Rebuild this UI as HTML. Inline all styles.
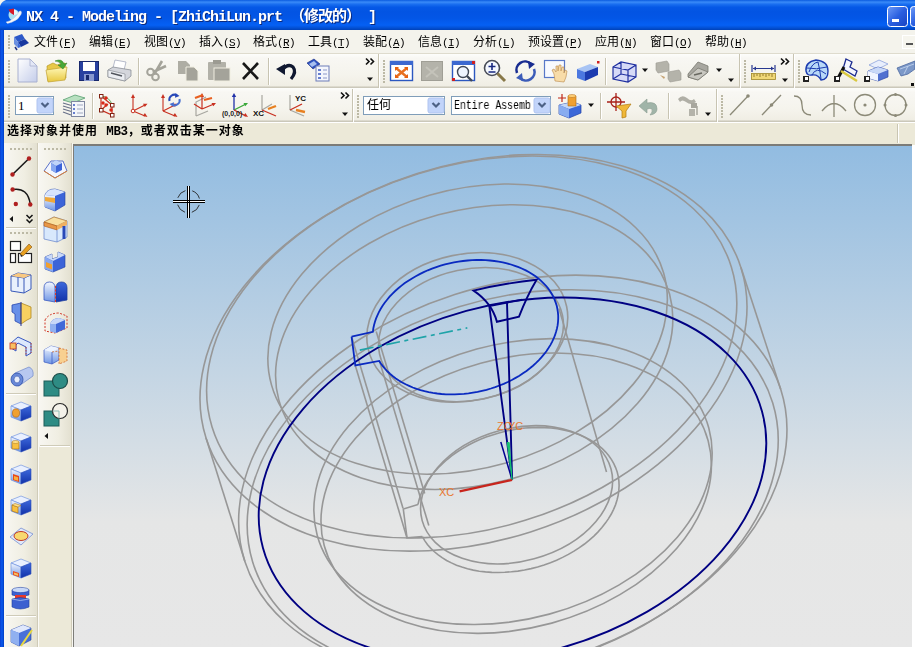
<!DOCTYPE html><html><head><meta charset="utf-8"><title>NX 4 - Modeling</title><style>
*{box-sizing:border-box;margin:0;padding:0}
html,body{width:915px;height:647px;overflow:hidden;background:#ece9d8}
body{position:relative;font-family:"Liberation Mono","Noto Sans CJK SC",monospace;font-size:12px;color:#000}
.abs{position:absolute}
#title{left:0;top:0;width:915px;height:30px;background:linear-gradient(to bottom,#0a5be0 0%,#3a8bf8 7%,#1a6ff0 14%,#0558e6 24%,#0354e3 40%,#0356e6 60%,#045df0 76%,#0560f4 84%,#0352d8 92%,#0042b8 100%)}
#title .t{will-change:transform;left:26px;top:10px;color:#fff;font-weight:bold;font-size:15px;letter-spacing:-1px;line-height:16px;white-space:pre;text-shadow:1px 1px 0 #0a2a80;font-family:"Liberation Mono","Noto Sans CJK SC",monospace}
#lborder{left:0;top:30px;width:4px;height:617px;background:linear-gradient(to right,#0a3fd0,#0a55e8 40%,#0650e0 75%,#0038b8)}
#menu{left:4px;top:30px;width:911px;height:24px;background:#f4f3ec;border-bottom:1px solid #dedbcd}
.mi{position:absolute;top:36px;will-change:transform;font-size:12px;line-height:14px;white-space:pre}
.mi .l{font-family:"Liberation Mono",monospace;font-size:11px;letter-spacing:-0.6px}
.st .l{font-family:"Liberation Mono",monospace;font-size:12.5px;letter-spacing:-0.3px}
.tb{left:4px;width:911px;background:linear-gradient(to bottom,#fdfdfb 0%,#f8f7f3 12%,#f5f4ed 60%,#f0eee4 94%,#cbc8ba 97%,#cbc8ba 100%)}
#tb1{top:54px;height:34px}
#tb2{top:88px;height:34px}
#status{left:4px;top:122px;width:911px;height:21px;background:#ece9d8;border-top:1px solid #fff}
.st{will-change:transform;left:7px;top:125px;font-weight:bold;font-size:12px;line-height:14px;letter-spacing:1px;white-space:pre;font-family:"Liberation Mono","Noto Sans CJK SC",monospace}
#left1{left:4px;top:143px;width:34px;height:504px;background:linear-gradient(to right,#f8f7f2,#f0eee2 60%,#e2dfcf 100%)}
#left2{left:38px;top:143px;width:34px;height:504px;background:linear-gradient(to right,#f8f7f2,#f0eee2 60%,#e2dfcf 100%)}
#view{left:72px;top:143px;width:843px;height:504px;background:#ece9d8;border-left:1px solid #f8f7f2}
#vb{left:73px;top:144px;width:839px;height:503px;background:#7c7c78}
#vr{left:912px;top:145px;width:3px;height:502px;background:#fff}
#l2b{left:39px;top:447px;width:32px;height:200px;background:#ece9d8}
#stsep{left:897px;top:124px;width:2px;height:19px;border-left:1px solid #c9c5b2;border-right:1px solid #fff}
#vp{left:74px;top:146px;width:838px;height:501px;background:linear-gradient(to bottom,#92bce1 0%,#e5e6e6 75%,#e7e7e7 100%)}
svg{position:absolute;left:0;top:0;overflow:visible}
.g{fill:none;stroke:#979797;stroke-width:1.6}
.b{fill:none;stroke:#000082;stroke-width:1.9}
.b2{fill:none;stroke:#0a2ac0;stroke-width:1.8}
.grip{position:absolute;width:3px;border-left:2px dotted #b0ac98}
.sep{position:absolute;width:2px;border-left:1px solid #c5c1b0;border-right:1px solid #fff}
.combo{position:absolute;background:#fff;border:1px solid #7f9db9;height:19px;font-size:12px;line-height:17px;padding-left:3px;white-space:pre;overflow:hidden}
.combo .btn{position:absolute;right:1px;top:1px;width:15px;height:15px;border-radius:2px;background:linear-gradient(135deg,#d6e2fb,#aec4f5 60%,#98b4ee);border:1px solid #b5c8f5}
.combo .btn:after{content:"";position:absolute;left:3px;top:3px;width:5px;height:5px;border-right:2px solid #4d6185;border-bottom:2px solid #4d6185;transform:rotate(45deg) scale(.8)}
.dd{position:absolute;width:0;height:0;border-left:3px solid transparent;border-right:3px solid transparent;border-top:4px solid #000}
.cb{will-change:transform;font-size:12px;line-height:15px;white-space:pre}
.chev{position:absolute;font-size:11px;font-weight:bold;line-height:10px;font-family:"Liberation Sans",sans-serif;letter-spacing:-1px}
</style></head><body><div id="title" class="abs"><div class="abs t">NX 4 - Modeling - [ZhiChiLun.prt （修改的） ]</div><svg width="915" height="30" viewBox="0 0 915 30"><g transform="translate(6,7)"><ellipse cx="8" cy="8" rx="5.500" ry="5.800" fill="#a8e0f0"/><path d="M2.500 2.500 L8 1.500 L8 8 Q4 6.500 2.500 2.500Z" fill="#d81828"/><path d="M8 2.500 Q11 3 12 7 L8 8Z" fill="#e8f4fc"/><path d="M0 15 Q9 13 13.500 4 Q16.500 3.500 15 7.500 Q11 14.500 1.500 16.500Z" fill="#f4f6fa" stroke="#c0c8d8" stroke-width=".4"/></g><path d="M0 0 H6 Q1.500 1.500 0 6Z" fill="#f4f4ee"/><rect x="887.5" y="6.5" width="20" height="20" rx="3" fill="url(#gbtn)" stroke="#fff" stroke-width="1"/><rect x="892" y="19" width="7" height="3" fill="#fff"/><rect x="910.5" y="6.5" width="20" height="20" rx="3" fill="url(#gbtn)" stroke="#fff" stroke-width="1"/></svg></div><div id="lborder" class="abs"></div><div id="menu" class="abs"></div><div class="mi" style="left:34px">文件<span class="l">(<u>F</u>)</span></div><div class="mi" style="left:89px">编辑<span class="l">(<u>E</u>)</span></div><div class="mi" style="left:144px">视图<span class="l">(<u>V</u>)</span></div><div class="mi" style="left:199px">插入<span class="l">(<u>S</u>)</span></div><div class="mi" style="left:253px">格式<span class="l">(<u>R</u>)</span></div><div class="mi" style="left:308px">工具<span class="l">(<u>T</u>)</span></div><div class="mi" style="left:363px">装配<span class="l">(<u>A</u>)</span></div><div class="mi" style="left:418px">信息<span class="l">(<u>I</u>)</span></div><div class="mi" style="left:473px">分析<span class="l">(<u>L</u>)</span></div><div class="mi" style="left:528px">预设置<span class="l">(<u>P</u>)</span></div><div class="mi" style="left:595px">应用<span class="l">(<u>N</u>)</span></div><div class="mi" style="left:650px">窗口<span class="l">(<u>O</u>)</span></div><div class="mi" style="left:705px">帮助<span class="l">(<u>H</u>)</span></div><svg width="915" height="60" viewBox="0 0 915 60" style="top:0"><rect x="8" y="35" width="2" height="2" fill="#bcb9a5"/><rect x="8" y="38" width="2" height="2" fill="#bcb9a5"/><rect x="8" y="41" width="2" height="2" fill="#bcb9a5"/><rect x="8" y="44" width="2" height="2" fill="#bcb9a5"/><rect x="8" y="47" width="2" height="2" fill="#bcb9a5"/><g transform="translate(13,33)"><path d="M1 4 L9 1 L12 6 L5 9Z" fill="#2c58c8"/><path d="M1 4 L5 9 L5 15 L1 11Z" fill="#6c90e0"/><path d="M5 9 L12 6 L16 10 L8 14Z" fill="#1838a0"/><path d="M5 9 L8 14 L5 15Z" fill="#3c68d8"/><path d="M2 14 L4 17" stroke="#203080" stroke-width="1.5"/></g><rect x="902.5" y="35.5" width="16" height="13" fill="#f6f5ee" stroke="#fff"/><rect x="906" y="43" width="7" height="2" fill="#555"/></svg><div id="tb1" class="abs tb"></div><div id="tb2" class="abs tb"></div><svg width="915" height="647" viewBox="0 0 915 647"><defs>
<linearGradient id="gb" x1="0" y1="0" x2="1" y2="1"><stop offset="0" stop-color="#e8f0ff"/><stop offset=".5" stop-color="#7fa4ea"/><stop offset="1" stop-color="#1f48c8"/></linearGradient>
<linearGradient id="gb2" x1="0" y1="0" x2="0" y2="1"><stop offset="0" stop-color="#f4f8ff"/><stop offset="1" stop-color="#6e95e4"/></linearGradient>
<linearGradient id="gdk" x1="0" y1="0" x2="0" y2="1"><stop offset="0" stop-color="#3c68dc"/><stop offset="1" stop-color="#1232a8"/></linearGradient>
<linearGradient id="gor" x1="0" y1="0" x2="0" y2="1"><stop offset="0" stop-color="#ffe9a0"/><stop offset="1" stop-color="#f09a28"/></linearGradient>
<linearGradient id="gfold" x1="0" y1="0" x2="0" y2="1"><stop offset="0" stop-color="#fff8b8"/><stop offset="1" stop-color="#e8c840"/></linearGradient>
<linearGradient id="gpage" x1="0" y1="0" x2="1" y2="1"><stop offset="0" stop-color="#ffffff"/><stop offset="1" stop-color="#c4cdea"/></linearGradient>
<linearGradient id="gbtn" x1="0" y1="0" x2="1" y2="1"><stop offset="0" stop-color="#6f9cf8"/><stop offset=".5" stop-color="#2a5fe0"/><stop offset="1" stop-color="#1842c0"/></linearGradient>
<linearGradient id="ggray" x1="0" y1="0" x2="0" y2="1"><stop offset="0" stop-color="#c8c7c0"/><stop offset="1" stop-color="#9a9990"/></linearGradient>
</defs><rect x="8" y="60" width="2" height="2" fill="#bcb9a5"/><rect x="8" y="63" width="2" height="2" fill="#bcb9a5"/><rect x="8" y="66" width="2" height="2" fill="#bcb9a5"/><rect x="8" y="69" width="2" height="2" fill="#bcb9a5"/><rect x="8" y="72" width="2" height="2" fill="#bcb9a5"/><rect x="8" y="75" width="2" height="2" fill="#bcb9a5"/><rect x="8" y="78" width="2" height="2" fill="#bcb9a5"/><rect x="8" y="81" width="2" height="2" fill="#bcb9a5"/><g transform="translate(17,58)"><path d="M1 1 L13 1 L20 8 L20 24 L1 24Z" fill="url(#gpage)" stroke="#a8b0d0" stroke-width="1"/><path d="M13 1 L13 8 L20 8Z" fill="#e4e8f6" stroke="#a8b0d0" stroke-width=".8"/></g><g transform="translate(45,58)"><path d="M2 8 L8 5 L12 7 L20 5 L21 20 L3 23Z" fill="#e8c848" stroke="#b89820" stroke-width=".7"/><path d="M1 12 L22 9 L20 22 L3 24Z" fill="url(#gfold)" stroke="#c0a030" stroke-width=".7"/><path d="M10 3 Q17 0 19 6 L22 5 L18 11 L13 7 L16 7 Q15 3 10 3Z" fill="#48a838" stroke="#2c7c20" stroke-width=".5"/></g><g transform="translate(79,61)"><rect x="0.5" y="0.5" width="19" height="19" fill="#2840a0" stroke="#18286c"/><rect x="4" y="1" width="12" height="9" fill="#fff"/><rect x="5" y="13" width="10" height="7" fill="#8898d0"/><rect x="7" y="14" width="3" height="5" fill="#18286c"/></g><g transform="translate(107,59)"><path d="M8 1 L19 3 L17 11 L6 9Z" fill="#fff" stroke="#9aa0b8" stroke-width=".7"/><path d="M1 11 L6 8 L24 11 L24 17 L18 22 L1 18Z" fill="#d4d6dc" stroke="#80848c" stroke-width=".7"/><path d="M1 11 L18 15 L18 22 L1 18Z" fill="#eceef2" stroke="#80848c" stroke-width=".6"/><path d="M4 14 L15 17" stroke="#50545c" stroke-width="1.5"/></g><rect x="138" y="58" width="1" height="27" fill="#c8c4b2"/><rect x="139" y="58" width="1" height="27" fill="#fff"/><g transform="translate(146,60)"><path d="M16 1 L9 13 M20 6 L7 12" stroke="#a4a39a" stroke-width="2.6" fill="none"/><circle cx="4.5" cy="12" r="3.3" fill="none" stroke="#a4a39a" stroke-width="2"/><circle cx="9.5" cy="17" r="3.3" fill="none" stroke="#a4a39a" stroke-width="2"/></g><g transform="translate(177,60)"><path d="M1 1 L9 1 L13 5 L13 14 L1 14Z" fill="#aeada4"/><path d="M9 7 L17 7 L21 11 L21 21 L9 21Z" fill="#a4a39a" stroke="#efede0" stroke-width="1"/></g><g transform="translate(207,59)"><rect x="1" y="3" width="18" height="18" rx="1" fill="#b2b1a8"/><rect x="6" y="1" width="8" height="4" fill="#9c9b92"/><rect x="7" y="9" width="16" height="13" fill="#a4a39a" stroke="#efede0" stroke-width="1"/></g><g transform="translate(242,62)"><path d="M1 1 L16 17 M16 1 L1 17" stroke="#181818" stroke-width="2.6" fill="none"/></g><rect x="268" y="58" width="1" height="27" fill="#c8c4b2"/><rect x="269" y="58" width="1" height="27" fill="#fff"/><g transform="translate(276,61)"><path d="M6 9 Q12 2 17 6 Q21 11 15 18" fill="none" stroke="#101830" stroke-width="3.2"/><path d="M0 8 L9 3 L9 14Z" fill="#101830"/></g><g transform="translate(306,58)"><path d="M1 5 L8 1 L14 6 L7 11Z" fill="#2c50c0" stroke="#182c80" stroke-width=".6"/><path d="M3 6 L8 3 L11 6 L6 9Z" fill="#a8c0f0"/><rect x="10" y="8" width="13" height="15" fill="#f4f6fc" stroke="#6c7cb8" stroke-width="1"/><path d="M12 12h3 M12 16h3 M12 20h3" stroke="#3858c0" stroke-width="1.6"/><path d="M17 12h4 M17 16h4 M17 20h4" stroke="#8c98c8" stroke-width="1"/></g><path d="M366 58.5 l3 3 l-3 3 M370.5 58.5 l3 3 l-3 3" fill="none" stroke="#111" stroke-width="1.6"/><path d="M367 77.5 l6 0 l-3 3.5Z" fill="#111"/><rect x="378" y="54" width="1" height="34" fill="#c8c4b2"/><rect x="379" y="54" width="1" height="34" fill="#fff"/><rect x="383" y="60" width="2" height="2" fill="#bcb9a5"/><rect x="383" y="63" width="2" height="2" fill="#bcb9a5"/><rect x="383" y="66" width="2" height="2" fill="#bcb9a5"/><rect x="383" y="69" width="2" height="2" fill="#bcb9a5"/><rect x="383" y="72" width="2" height="2" fill="#bcb9a5"/><rect x="383" y="75" width="2" height="2" fill="#bcb9a5"/><rect x="383" y="78" width="2" height="2" fill="#bcb9a5"/><rect x="383" y="81" width="2" height="2" fill="#bcb9a5"/><g transform="translate(390,61)"><rect x=".5" y=".5" width="22" height="19" fill="#fff" stroke="#2c58c0" stroke-width="1.4"/><rect x="0" y="0" width="23" height="4" fill="#3c68d0"/><path d="M6 7 L17 16 M17 7 L6 16" stroke="#e87020" stroke-width="2.4"/><path d="M5 6 h4 l-4 4z M18 6 h-4 l4 4z M5 17 h4 l-4 -4z M18 17 h-4 l4 -4z" fill="#e86010"/></g><g transform="translate(421,61)"><rect x=".5" y=".5" width="21" height="19" fill="#b4b3aa" stroke="#a09f96" stroke-width="1"/><path d="M5 6 L17 16 M17 6 L5 16" stroke="#c4c3ba" stroke-width="2"/></g><g transform="translate(452,61)"><rect x=".5" y=".5" width="22" height="19" fill="#fff" stroke="#2c58c0" stroke-width="1.4"/><rect x="0" y="0" width="23" height="4" fill="#3c68d0"/><circle cx="11" cy="11" r="5.5" fill="#eef4ff" stroke="#404858" stroke-width="1.4"/><path d="M15 15 L20 20" stroke="#404858" stroke-width="2.4"/><rect x="20" y="0" width="3" height="3" fill="#d02020"/><rect x="0" y="17" width="3" height="3" fill="#d02020"/></g><g transform="translate(483,59)"><circle cx="9" cy="9" r="7.5" fill="#f4f8ff" stroke="#484c58" stroke-width="1.6"/><path d="M5.5 7.5h7 M9 4v7 M5.5 13h7" stroke="#182880" stroke-width="1.6"/><path d="M14.5 14.5 L22 22" stroke="#887848" stroke-width="3"/></g><g transform="translate(514,60)"><path d="M3 13 A8.5 8.5 0 0 1 17 4" fill="none" stroke="#182c90" stroke-width="2.6"/><path d="M14 1 L21 4 L15 9Z" fill="#182c90"/><path d="M20 9 A8.5 8.5 0 0 1 6 18" fill="none" stroke="#3c5cb8" stroke-width="2.6"/><path d="M9 21 L2 18 L8 13Z" fill="#3c5cb8"/></g><g transform="translate(544,60)"><rect x=".5" y=".5" width="20" height="17" fill="#f8faff" stroke="#5878c8" stroke-width="1.2"/><path d="M11 21 L10 14 L8 10 L10 9 L12 12 L12 6 L14 6 L14 11 L15 5 L17 5 L17 11 L18 7 L20 7 L20 13 L21 10 L23 11 L22 17 L20 22Z" fill="#f8dca8" stroke="#b88848" stroke-width=".6"/></g><g transform="translate(576,60)"><path d="M1 9 L14 4 L22 7 L9 12Z" fill="#a8c4f4"/><path d="M1 9 L9 12 L9 21 L1 18Z" fill="#4c78e0"/><path d="M9 12 L22 7 L22 15 L9 21Z" fill="#1c3cb0"/><rect x="21" y="1" width="2.5" height="2.5" fill="#d02020"/></g><rect x="605" y="58" width="1" height="27" fill="#c8c4b2"/><rect x="606" y="58" width="1" height="27" fill="#fff"/><g transform="translate(612,60)"><path d="M1 7 L9 2 L24 5 L24 17 L16 22 L1 19Z" fill="#d6daf7"/><path d="M1 7 L9 2 L24 5 L24 17 L16 22 L1 19Z M1 7 L16 10 L24 5 M16 10 L16 22 M9 2 L9 14 L1 19 M9 14 L24 17" fill="none" stroke="#2030a0" stroke-width="1.2"/></g><path d="M642 68.5 l6 0 l-3 3.5Z" fill="#111"/><g transform="translate(655,60)"><path d="M1 3 L12 1 L14 4 L14 11 L3 13 L1 10Z" fill="#b4b3aa" stroke="#9c9b92" stroke-width=".6"/><path d="M13 12 L24 10 L26 13 L26 20 L15 22 L13 19Z" fill="#b4b3aa" stroke="#9c9b92" stroke-width=".6"/><path d="M5 15 l5 2 l-1 2z" fill="#c4a070"/></g><g transform="translate(686,60)"><path d="M2 14 L12 2 L22 6 L22 12 L12 20 L2 17Z" fill="#a8a7a0" stroke="#787870" stroke-width=".8"/><path d="M12 8 L22 12 L12 20 L2 17Z" fill="#c8c7c0" stroke="#787870" stroke-width=".8"/><path d="M8 15 l8 -2" stroke="#686860" stroke-width="1.5"/></g><path d="M716 68.5 l6 0 l-3 3.5Z" fill="#111"/><path d="M728 78.5 l6 0 l-3 3.5Z" fill="#111"/><rect x="739" y="54" width="1" height="34" fill="#c8c4b2"/><rect x="740" y="54" width="1" height="34" fill="#fff"/><rect x="744" y="60" width="2" height="2" fill="#bcb9a5"/><rect x="744" y="63" width="2" height="2" fill="#bcb9a5"/><rect x="744" y="66" width="2" height="2" fill="#bcb9a5"/><rect x="744" y="69" width="2" height="2" fill="#bcb9a5"/><rect x="744" y="72" width="2" height="2" fill="#bcb9a5"/><rect x="744" y="75" width="2" height="2" fill="#bcb9a5"/><rect x="744" y="78" width="2" height="2" fill="#bcb9a5"/><rect x="744" y="81" width="2" height="2" fill="#bcb9a5"/><g transform="translate(751,62)"><path d="M1 3 v7 M24 3 v7 M2 6.5 h21" stroke="#283890" stroke-width="1.2" fill="none"/><path d="M2 6.5 l3 -2 v4z M23 6.5 l-3 -2 v4z" fill="#283890"/><rect x=".5" y="11.5" width="24" height="6" fill="#f0d878" stroke="#a08828" stroke-width=".8"/><path d="M3 12v3 M6 12v2 M9 12v3 M12 12v2 M15 12v3 M18 12v2 M21 12v3" stroke="#705810" stroke-width=".7"/></g><path d="M781 58.5 l3 3 l-3 3 M785.5 58.5 l3 3 l-3 3" fill="none" stroke="#111" stroke-width="1.6"/><path d="M782 78.5 l6 0 l-3 3.5Z" fill="#111"/><rect x="793" y="54" width="1" height="34" fill="#c8c4b2"/><rect x="794" y="54" width="1" height="34" fill="#fff"/><rect x="798" y="60" width="2" height="2" fill="#bcb9a5"/><rect x="798" y="63" width="2" height="2" fill="#bcb9a5"/><rect x="798" y="66" width="2" height="2" fill="#bcb9a5"/><rect x="798" y="69" width="2" height="2" fill="#bcb9a5"/><rect x="798" y="72" width="2" height="2" fill="#bcb9a5"/><rect x="798" y="75" width="2" height="2" fill="#bcb9a5"/><rect x="798" y="78" width="2" height="2" fill="#bcb9a5"/><rect x="798" y="81" width="2" height="2" fill="#bcb9a5"/><g transform="translate(804,58)"><path d="M2 13 Q1 4 12 2 Q24 3 24 13 Q24 22 17 22 Q14 16 8 17 Q3 18 2 13Z" fill="#b8d8f8" stroke="#1c3cb0" stroke-width="1.4"/><path d="M5 14 Q8 5 14 4 Q16 12 17 21 M3 10 Q12 12 23 9 M8 17 Q12 8 22 16" fill="none" stroke="#1c3cb0" stroke-width="1"/></g><rect x="803" y="76" width="6" height="6" fill="#222"/><rect x="805" y="77" width="3" height="3" fill="#fff"/><g transform="translate(835,58)"><path d="M11 1 L17 4 L15 9 L22 13 L20 18 L8 11Z" fill="#f4f6ff" stroke="#1c2c90" stroke-width="1.3"/><path d="M2 22 L9 9" stroke="#101010" stroke-width="3"/><path d="M6 13 L22 23" stroke="#d8c840" stroke-width="2.4"/></g><rect x="834" y="76" width="6" height="6" fill="#222"/><rect x="836" y="77" width="3" height="3" fill="#fff"/><g transform="translate(866,58)"><path d="M3 7 L13 2 L22 6 L12 11Z" fill="#e8eefc" stroke="#8098d8" stroke-width=".7"/><path d="M2 13 L12 9 L22 12 L22 19 L12 23 L2 20Z" fill="#5070d0" stroke="#2c48a8" stroke-width=".7"/><path d="M2 13 L12 9 L22 12 L12 16Z" fill="#c8d8f8"/><path d="M2 13 L12 16 L12 23 L2 20Z" fill="#f0f4ff"/></g><rect x="864" y="76" width="6" height="6" fill="#222"/><rect x="866" y="77" width="3" height="3" fill="#fff"/><g transform="translate(896,60)"><path d="M1 8 L19 1 L19 9 L12 14 L5 16Z" fill="#7c98c8" stroke="#4c68a0" stroke-width=".8"/><path d="M4 9 L18 4 M8 14 L12 6" stroke="#c8d8f0" stroke-width=".8"/></g><rect x="911" y="83" width="3" height="3" fill="#111"/></svg><svg width="915" height="647" viewBox="0 0 915 647"><rect x="8" y="95" width="2" height="2" fill="#bcb9a5"/><rect x="8" y="98" width="2" height="2" fill="#bcb9a5"/><rect x="8" y="101" width="2" height="2" fill="#bcb9a5"/><rect x="8" y="104" width="2" height="2" fill="#bcb9a5"/><rect x="8" y="107" width="2" height="2" fill="#bcb9a5"/><rect x="8" y="110" width="2" height="2" fill="#bcb9a5"/><rect x="8" y="113" width="2" height="2" fill="#bcb9a5"/><rect x="8" y="116" width="2" height="2" fill="#bcb9a5"/><rect x="15.5" y="96.5" width="38" height="18" fill="#fff" stroke="#7f9db9"/><text x="18" y="110" font-family="Liberation Serif,serif" font-size="13">1</text><rect x="37" y="98" width="16" height="15" rx="2" fill="#c2d4fa" stroke="#b0c4f0" stroke-width="1"/><path d="M41.5 103 l3.5 3.5 l3.5 -3.5" fill="none" stroke="#4d6185" stroke-width="2.2"/><g transform="translate(61,94)"><path d="M2 6 L14 1 L24 4 L12 9Z" fill="#b8e0c0" stroke="#58a070" stroke-width=".8"/><path d="M2 9 L12 12 M2 12 L12 15 M2 15 L12 18 M2 18 L10 21" stroke="#687088" stroke-width="1.2"/><rect x="10.5" y="7.5" width="13" height="15" fill="#f4f6fa" stroke="#8088a0"/><path d="M12 11h2 M12 15h2 M12 19h2" stroke="#3858c0" stroke-width="1.6"/><path d="M16 11h6 M16 15h6 M16 19h6" stroke="#a0a8c0" stroke-width="1"/></g><rect x="92" y="93" width="1" height="26" fill="#c8c4b2"/><rect x="93" y="93" width="1" height="26" fill="#fff"/><g transform="translate(98,93)"><path d="M3 3 L3 17 L14 22 L14 12 Z M3 3 L14 12 M3 17 L10 11" fill="none" stroke="#c83020" stroke-width="1.2"/><path d="M3 3 Q12 4 14 12" fill="none" stroke="#58a050" stroke-width="1"/><rect x="1.5" y="1.5" width="3.5" height="3.5" fill="#fff" stroke="#802010" stroke-width="1"/><rect x="1.5" y="15.5" width="3.5" height="3.5" fill="#fff" stroke="#802010" stroke-width="1"/><rect x="12.5" y="10.5" width="3.5" height="3.5" fill="#fff" stroke="#802010" stroke-width="1"/><rect x="12.5" y="20.5" width="3.5" height="3.5" fill="#fff" stroke="#802010" stroke-width="1"/><circle cx="8" cy="5" r="1.7" fill="#d82818"/><circle cx="8" cy="12" r="1.7" fill="#d82818"/><circle cx="13" cy="17" r="1.7" fill="#d82818"/><circle cx="5" cy="10" r="1.7" fill="#d82818"/></g><g transform="translate(125,92)"><path d="M8 19 L8 4 M8 19 L20 13 M8 19 L20 24" stroke="#c83020" stroke-width="1.1" fill="none"/><path d="M8 2 l-2 4 h4z M22.500 11.800 l-4.500 0 l1.800 3.200z M22.500 25 l-4.600 -1 l2 -3z" fill="#c83020"/><circle cx="8" cy="19" r="1.8" fill="#fff" stroke="#c83020"/></g><g transform="translate(155,92)"><path d="M8 19 L8 4 M8 19 L20 13 M8 19 L20 24" stroke="#c83020" stroke-width="1.1" fill="none"/><path d="M8 2 l-2 4 h4z M22.500 11.800 l-4.500 0 l1.800 3.200z M22.500 25 l-4.600 -1 l2 -3z" fill="#c83020"/><path d="M14.5 9 A5 5 0 0 1 22 3.500" fill="none" stroke="#2848b8" stroke-width="2"/><path d="M20.500 1 l4 3 l-4.500 1.800z" fill="#2848b8"/><path d="M24.500 7 A5 5 0 0 1 17 12.500" fill="none" stroke="#4870d0" stroke-width="2"/><path d="M18.500 15 l-4 -3 l4.500 -1.800z" fill="#4870d0"/></g><g transform="translate(190,92)"><path d="M6 24 L6 10 L16 5 M6 24 L18 19" stroke="#a8a7a0" stroke-width="1.2" fill="none"/><path d="M12 17 L12 3 M12 17 L24 12 M12 17 L4 12" stroke="#c83020" stroke-width="1.2" fill="none"/><path d="M12 1 l-2 4 h4z M26 11 l-4.5 0 l1.8 3.2z" fill="#c83020"/><path d="M5 6 l8 -3 M14 8 l8 -2" stroke="#e86020" stroke-width="2.2"/></g><g transform="translate(222,92)"><path d="M12 18 L12 3" stroke="#2030a8" stroke-width="1.3"/><path d="M12 1 l-2.2 4 h4.4z" fill="#2030a8"/><path d="M12 18 L24 12" stroke="#38a838" stroke-width="1.3"/><path d="M26 11 l-4.5 0 l1.8 3.2z" fill="#38a838"/><path d="M12 18 L24 24" stroke="#c83020" stroke-width="1.3"/><path d="M26 25 l-4.6 -1 l2 -3z" fill="#c83020"/><text x="0" y="24" font-family="Liberation Sans,sans-serif" font-size="7" font-weight="bold" fill="#222">(0,0,0)</text></g><g transform="translate(252,92)"><path d="M10 18 L10 3 M10 18 L20 12" stroke="#a8a7a0" stroke-width="1.2" fill="none"/><path d="M10 18 L24 24" stroke="#c83020" stroke-width="1.3"/><path d="M16 17 l8 -3" stroke="#e88020" stroke-width="2.4"/><text x="1" y="24" font-family="Liberation Sans,sans-serif" font-size="8" font-weight="bold" fill="#111">XC</text></g><g transform="translate(282,92)"><path d="M8 18 L8 3 M8 18 L22 24" stroke="#a8a7a0" stroke-width="1.2" fill="none"/><path d="M8 18 L20 12" stroke="#c83020" stroke-width="1.3"/><path d="M14 18 l9 2" stroke="#e88020" stroke-width="2.4"/><text x="13" y="9" font-family="Liberation Sans,sans-serif" font-size="8" font-weight="bold" fill="#111">YC</text></g><path d="M341 92.5 l3 3 l-3 3 M345.5 92.5 l3 3 l-3 3" fill="none" stroke="#111" stroke-width="1.6"/><path d="M342 112.5 l6 0 l-3 3.5Z" fill="#111"/><rect x="352" y="89" width="1" height="33" fill="#c8c4b2"/><rect x="353" y="89" width="1" height="33" fill="#fff"/><rect x="357" y="95" width="2" height="2" fill="#bcb9a5"/><rect x="357" y="98" width="2" height="2" fill="#bcb9a5"/><rect x="357" y="101" width="2" height="2" fill="#bcb9a5"/><rect x="357" y="104" width="2" height="2" fill="#bcb9a5"/><rect x="357" y="107" width="2" height="2" fill="#bcb9a5"/><rect x="357" y="110" width="2" height="2" fill="#bcb9a5"/><rect x="357" y="113" width="2" height="2" fill="#bcb9a5"/><rect x="357" y="116" width="2" height="2" fill="#bcb9a5"/><rect x="363.5" y="96.5" width="81" height="18" fill="#fff" stroke="#7f9db9"/><rect x="428" y="98" width="16" height="15" rx="2" fill="#c2d4fa" stroke="#b0c4f0" stroke-width="1"/><path d="M432.5 103 l3.5 3.5 l3.5 -3.5" fill="none" stroke="#4d6185" stroke-width="2.2"/><rect x="451.5" y="96.5" width="99" height="18" fill="#fff" stroke="#7f9db9"/><rect x="534" y="98" width="16" height="15" rx="2" fill="#c2d4fa" stroke="#b0c4f0" stroke-width="1"/><path d="M538.5 103 l3.5 3.5 l3.5 -3.5" fill="none" stroke="#4d6185" stroke-width="2.2"/><g transform="translate(557,93)"><path d="M2 12 L16 9 L24 12 L24 20 L12 25 L2 21Z" fill="#3c68d8" stroke="#2040a8" stroke-width=".7"/><path d="M2 12 L16 9 L24 12 L12 16Z" fill="#c4d8f8"/><path d="M2 12 L12 16 L12 25 L2 21Z" fill="#88acf0"/><path d="M11 3 h8 v10 h-8z" fill="#f0a030" stroke="#b06810" stroke-width=".6"/><ellipse cx="15" cy="3" rx="4" ry="1.5" fill="#ffd078" stroke="#b06810" stroke-width=".5"/><path d="M1 5 h8 M5 1 v8" stroke="#c02818" stroke-width="1.2"/></g><path d="M588 103.5 l6 0 l-3 3.5Z" fill="#111"/><rect x="600" y="93" width="1" height="26" fill="#c8c4b2"/><rect x="601" y="93" width="1" height="26" fill="#fff"/><g transform="translate(607,93)"><circle cx="9" cy="9" r="5" fill="none" stroke="#a82018" stroke-width="1.3"/><path d="M9 0 v18 M0 9 h18" stroke="#a82018" stroke-width="1.3"/><path d="M9 13 L24 11 L19 18 L19 24 L15 25 L15 18Z" fill="#f0b838" stroke="#b07810" stroke-width=".7"/></g><g transform="translate(638,95)"><path d="M1 11 L9 4 L9 8 Q19 6 19 14 Q19 19 12 20 Q15 17 14 14 Q12 13 9 14 L9 18Z" fill="#a0b4a8" stroke="#8a9c90" stroke-width=".6"/></g><rect x="668" y="93" width="1" height="26" fill="#c8c4b2"/><rect x="669" y="93" width="1" height="26" fill="#fff"/><g transform="translate(676,93)"><path d="M2 6 Q6 1 11 5 Q15 9 18 6 L20 9 Q15 13 10 9 Q6 6 4 9Z" fill="#b0afa6"/><rect x="15" y="10" width="6" height="5" fill="#a8a79e"/><rect x="13" y="16" width="6" height="7" fill="#b4b3aa"/><path d="M21 13 v9" stroke="#a8a79e" stroke-width="1.5"/></g><path d="M705 112.5 l6 0 l-3 3.5Z" fill="#111"/><rect x="716" y="89" width="1" height="33" fill="#c8c4b2"/><rect x="717" y="89" width="1" height="33" fill="#fff"/><rect x="721" y="95" width="2" height="2" fill="#bcb9a5"/><rect x="721" y="98" width="2" height="2" fill="#bcb9a5"/><rect x="721" y="101" width="2" height="2" fill="#bcb9a5"/><rect x="721" y="104" width="2" height="2" fill="#bcb9a5"/><rect x="721" y="107" width="2" height="2" fill="#bcb9a5"/><rect x="721" y="110" width="2" height="2" fill="#bcb9a5"/><rect x="721" y="113" width="2" height="2" fill="#bcb9a5"/><rect x="721" y="116" width="2" height="2" fill="#bcb9a5"/><path d="M730 115 L748 96" stroke="#8c8a78" stroke-width="1.3"/><circle cx="748" cy="96" r="1.8" fill="#8c8a78"/><path d="M762 115 L781 95" stroke="#8c8a78" stroke-width="1.3"/><circle cx="771.5" cy="105" r="1.8" fill="#8c8a78"/><path d="M794 96 Q802 96 802 105 Q802 115 811 115" fill="none" stroke="#8c8a78" stroke-width="1.3"/><path d="M822 111 Q834 96 846 111 M834 95 V117" fill="none" stroke="#8c8a78" stroke-width="1.3"/><circle cx="865" cy="105" r="10.5" fill="none" stroke="#8c8a78" stroke-width="1.3"/><circle cx="865" cy="105" r="1.6" fill="#8c8a78"/><circle cx="895.5" cy="105" r="10.5" fill="none" stroke="#8c8a78" stroke-width="1.3"/><circle cx="895.5" cy="94.5" r="1.5" fill="#8c8a78"/><circle cx="895.5" cy="115.5" r="1.5" fill="#8c8a78"/><circle cx="885" cy="105" r="1.5" fill="#8c8a78"/><circle cx="906" cy="105" r="1.5" fill="#8c8a78"/></svg><div class="abs cb" style="left:367px;top:99px">任何</div><div class="abs cb" style="left:454px;top:99px;font-family:'Liberation Mono',monospace;font-size:12px;transform:scaleX(.82);transform-origin:0 0">Entire Assemb</div><div id="status" class="abs"></div><div class="abs st">选择对象并使用 <span class="l">MB3</span>，或者双击某一对象</div><div id="left1" class="abs"></div><div id="left2" class="abs"></div><svg width="915" height="647" viewBox="0 0 915 647"><rect x="37" y="143" width="1" height="504" fill="#cfcbb8"/><rect x="38" y="143" width="1" height="504" fill="#fbfaf6"/><rect x="71" y="143" width="1" height="504" fill="#cfcbb8"/><rect x="10" y="148" width="2" height="2" fill="#bcb9a5"/><rect x="14" y="148" width="2" height="2" fill="#bcb9a5"/><rect x="18" y="148" width="2" height="2" fill="#bcb9a5"/><rect x="22" y="148" width="2" height="2" fill="#bcb9a5"/><rect x="26" y="148" width="2" height="2" fill="#bcb9a5"/><rect x="30" y="148" width="2" height="2" fill="#bcb9a5"/><rect x="44" y="148" width="2" height="2" fill="#bcb9a5"/><rect x="48" y="148" width="2" height="2" fill="#bcb9a5"/><rect x="52" y="148" width="2" height="2" fill="#bcb9a5"/><rect x="56" y="148" width="2" height="2" fill="#bcb9a5"/><rect x="60" y="148" width="2" height="2" fill="#bcb9a5"/><rect x="64" y="148" width="2" height="2" fill="#bcb9a5"/><rect x="10" y="232" width="2" height="2" fill="#bcb9a5"/><rect x="14" y="232" width="2" height="2" fill="#bcb9a5"/><rect x="18" y="232" width="2" height="2" fill="#bcb9a5"/><rect x="22" y="232" width="2" height="2" fill="#bcb9a5"/><rect x="26" y="232" width="2" height="2" fill="#bcb9a5"/><rect x="30" y="232" width="2" height="2" fill="#bcb9a5"/><path d="M12.5 174.5 L29 158.5" stroke="#181818" stroke-width="1.6"/><circle cx="12.5" cy="174.5" r="2.2" fill="#b02020"/><circle cx="29" cy="158.5" r="2.2" fill="#b02020"/><path d="M12.6 189.5 Q28 187 30.3 204.5" fill="none" stroke="#181818" stroke-width="1.6"/><circle cx="12.6" cy="189.5" r="2.2" fill="#b02020"/><circle cx="15.8" cy="204" r="2.2" fill="#b02020"/><circle cx="30.3" cy="204.5" r="2.2" fill="#b02020"/><path d="M13 216 v6 l-3.5 -3z" fill="#111"/><path d="M26.5 215 l3 3 l3 -3 M26.5 219.5 l3 3 l3 -3" fill="none" stroke="#111" stroke-width="1.5"/><rect x="6" y="227" width="30" height="1" fill="#cfcbb8"/><rect x="6" y="228" width="30" height="1" fill="#fff"/><g transform="translate(9,240)"><rect x="1.5" y="1.5" width="10" height="9" fill="#fff" stroke="#222" stroke-width="1.2"/><rect x="1.5" y="13.5" width="5" height="9" fill="#fff" stroke="#222" stroke-width="1.2"/><rect x="9.500" y="13.5" width="13" height="9" fill="#fff" stroke="#222" stroke-width="1.2"/><path d="M11 14 L20 4 L23 7 L14 16Z" fill="#e8a020" stroke="#805010" stroke-width=".6"/><path d="M11 14 l1 3 l2 -1z" fill="#222"/></g><g transform="translate(9,271)"><path d="M2 5 L9 2 L22 4 L22 18 L15 22 L2 20Z" fill="#e8f0fc" stroke="#3858b8" stroke-width="1"/><path d="M2 5 L15 7 L22 4 M15 7 L15 22 M9 2 L9 16" fill="none" stroke="#3858b8" stroke-width="1"/><path d="M2 5 L9 2 L22 4 L15 7Z" fill="#f8c880"/></g><g transform="translate(9,302)"><path d="M3 3 L12 1 L12 22 L6 19 L6 12 L3 10Z" fill="#6890e8" stroke="#2848b0" stroke-width=".8"/><path d="M12 1 L22 5 L22 16 L18 18 L12 22Z" fill="#f8d060" stroke="#b08820" stroke-width=".8"/><path d="M12 0 V24" stroke="#2838a0" stroke-width="1"/></g><g transform="translate(9,333)"><path d="M2 10 L9 4 L22 10 L22 20 L17 23 L17 14 L9 10 L7 12 L7 18 L2 15Z" fill="#dce8fc" stroke="#3858c0" stroke-width="1"/><rect x="1" y="10" width="6" height="6" fill="#f8c060" stroke="#c03020" stroke-width=".8"/><path d="M17 14 v9 M22 10 v10" stroke="#c03020" stroke-width=".8" stroke-dasharray="1.5 1.5"/></g><g transform="translate(9,365)"><path d="M6 8 L20 2 Q25 4 24 11 L10 21 Q2 20 6 8Z" fill="#b8c8f0" stroke="#7088c8" stroke-width=".7"/><ellipse cx="8" cy="14.500" rx="6" ry="6.5" fill="#6888d8" stroke="#3050a8" stroke-width=".8"/><ellipse cx="8" cy="14.500" rx="3" ry="3.400" fill="#e8eefc" stroke="#3050a8" stroke-width=".6"/></g><rect x="6" y="393" width="30" height="1" fill="#cfcbb8"/><rect x="6" y="394" width="30" height="1" fill="#fff"/><g transform="translate(9,399)"><path d="M2 7 L12 3 L22 7 L12 11 Z" fill="#e9f0ff" stroke="#5f86dc" stroke-width=".6"/><path d="M2 7 L12 11 L12 22 L2 18 Z" fill="url(#gb2)" stroke="#5f86dc" stroke-width=".6"/><path d="M12 11 L22 7 L22 18 L12 22 Z" fill="url(#gdk)" stroke="#2a4cb8" stroke-width=".6"/><ellipse cx="7" cy="14" rx="3.6" ry="4.200" fill="#f0a030" stroke="#a86010" stroke-width=".6"/></g><g transform="translate(9,430)"><path d="M2 7 L12 3 L22 7 L12 11 Z" fill="#e9f0ff" stroke="#5f86dc" stroke-width=".6"/><path d="M2 7 L12 11 L12 22 L2 18 Z" fill="url(#gb2)" stroke="#5f86dc" stroke-width=".6"/><path d="M12 11 L22 7 L22 18 L12 22 Z" fill="url(#gdk)" stroke="#2a4cb8" stroke-width=".6"/><path d="M3 12 h7 v7 h-7z" fill="#f8c040" stroke="#a87010" stroke-width=".6"/><ellipse cx="6.5" cy="12" rx="3.5" ry="1.500" fill="#ffe088" stroke="#a87010" stroke-width=".5"/></g><g transform="translate(9,462)"><path d="M2 7 L12 3 L22 7 L12 11 Z" fill="#e9f0ff" stroke="#5f86dc" stroke-width=".6"/><path d="M2 7 L12 11 L12 22 L2 18 Z" fill="url(#gb2)" stroke="#5f86dc" stroke-width=".6"/><path d="M12 11 L22 7 L22 18 L12 22 Z" fill="url(#gdk)" stroke="#2a4cb8" stroke-width=".6"/><path d="M4 12 l6 2 v6 l-6 -2z" fill="#e84818"/><path d="M5 14 l4 1.3 v3.500 l-4 -1.300z" fill="#f8b040"/></g><g transform="translate(9,493)"><path d="M2 7 L12 3 L22 7 L12 11 Z" fill="#e9f0ff" stroke="#5f86dc" stroke-width=".6"/><path d="M2 7 L12 11 L12 22 L2 18 Z" fill="url(#gb2)" stroke="#5f86dc" stroke-width=".6"/><path d="M12 11 L22 7 L22 18 L12 22 Z" fill="url(#gdk)" stroke="#2a4cb8" stroke-width=".6"/><path d="M3 12 l6 2 v6 l-6 -2z" fill="#f8c040" stroke="#a87010" stroke-width=".6"/><path d="M3 12 l3 -1.500 l6 2 l-3 1.500z" fill="#ffe088" stroke="#a87010" stroke-width=".5"/></g><g transform="translate(9,525)"><path d="M1 12 L12 3 L24 9 L12 20Z" fill="#e0e8fa" stroke="#7890d0" stroke-width=".8"/><ellipse cx="12" cy="11" rx="7" ry="4.500" fill="#f8d870" stroke="#c03828" stroke-width="1"/></g><g transform="translate(9,556)"><path d="M2 7 L12 3 L22 7 L12 11 Z" fill="#e9f0ff" stroke="#5f86dc" stroke-width=".6"/><path d="M2 7 L12 11 L12 22 L2 18 Z" fill="url(#gb2)" stroke="#5f86dc" stroke-width=".6"/><path d="M12 11 L22 7 L22 18 L12 22 Z" fill="url(#gdk)" stroke="#2a4cb8" stroke-width=".6"/><path d="M4 15 l6 2 v4 l-6 -2z" fill="#e85020"/><path d="M5 16.500 l4 1.300 v2 l-4 -1.300z" fill="#f8c060"/></g><g transform="translate(11,586)"><path d="M1 4 Q9 0 18 4 V9 Q9 12 1 9Z" fill="#3c60d0" stroke="#2040a0" stroke-width=".6"/><ellipse cx="9.500" cy="4" rx="8.500" ry="2.600" fill="#c8d8f8" stroke="#2040a0" stroke-width=".5"/><path d="M4 9 h11 v4 h-11z" fill="#e83828"/><path d="M1 13 Q9 10 18 13 V21 Q9 25 1 21Z" fill="#3c60d0" stroke="#2040a0" stroke-width=".6"/><path d="M1 13 Q9 16 18 13" fill="none" stroke="#a8c0f0" stroke-width=".8"/></g><rect x="6" y="615" width="30" height="1" fill="#cfcbb8"/><rect x="6" y="616" width="30" height="1" fill="#fff"/><g transform="translate(9,622)"><path d="M2 8 L14 3 L22 6 L22 18 L10 24 L2 20Z" fill="#4870d8" stroke="#2040a0" stroke-width=".6"/><path d="M2 8 L14 3 L22 6 L10 11Z" fill="#e0e8fc"/><path d="M2 8 L10 11 L10 24 L2 20Z" fill="#90b0f0"/><path d="M12 24 L23 8" stroke="#e8d840" stroke-width="2"/></g><g transform="translate(43,156)"><path d="M1 15 L8 5 L20 5 L24 15 L12 22Z" fill="#f4f6fc" stroke="#5870c8" stroke-width="1"/><path d="M8 7 L13 4 L19 7 L19 14 L13 17 L8 14Z" fill="#3c64d8"/><path d="M8 7 L13 4 L19 7 L13 10Z" fill="#c0d4f8"/><path d="M8 7 L13 10 L13 17 L8 14Z" fill="#88a8f0"/><path d="M1 15 L12 22 L24 15" fill="none" stroke="#e08030" stroke-width="1"/></g><g transform="translate(43,187)"><path d="M2 8 Q4 2 12 2 L22 5 L22 18 L12 24 L2 20Z" fill="#3c64d8" stroke="#2040a0" stroke-width=".6"/><path d="M2 8 Q4 2 12 2 L22 5 L12 9Z" fill="#d8e4fc"/><path d="M2 8 L12 9 L12 24 L2 20Z" fill="url(#gb2)"/><path d="M2 10 L12 11 L12 16 L2 14Z" fill="#f0a838"/></g><g transform="translate(42,216)"><path d="M2 6 L12 1 L25 5 L25 21 L15 26 L2 23Z" fill="#d8e8fc" stroke="#6080c8" stroke-width=".7"/><path d="M2 6 L12 1 L25 5 L15 10Z" fill="#f8e0a0" stroke="#c08030" stroke-width=".7"/><path d="M2 6 L15 10 L15 14 L2 10Z" fill="#e89848" stroke="#a85818" stroke-width=".6"/><path d="M15 10 L25 5 L25 9 L15 14Z" fill="#f0b060"/><path d="M15 14 V26" stroke="#6080c8" stroke-width=".7"/><path d="M22 10 v13" stroke="#2848b8" stroke-width="3"/></g><g transform="translate(43,249)"><path d="M2 8 L9 5 L9 10 L15 8 L15 3 L22 6 L22 18 L10 23 L2 20Z" fill="#3c64d8" stroke="#2040a0" stroke-width=".6"/><path d="M2 8 L9 5 L9 10 L15 8 L15 3 L22 6 L10 12Z" fill="#c8d8f8"/><path d="M2 8 L10 12 L10 23 L2 20Z" fill="#88a8f0"/><path d="M3 13 l6 2.500 v5 l-6 -2.500z" fill="#f0a030"/></g><g transform="translate(43,280)"><path d="M1 8 Q1 2 6.500 2 Q12 2 12 8 V22 L1 20Z" fill="url(#gb2)" stroke="#3858c0" stroke-width=".8"/><path d="M13 8 Q13 2 18.500 2 Q24 2 24 8 V20 L13 22Z" fill="url(#gdk)" stroke="#2040a0" stroke-width=".8"/><path d="M12.500 6 V23" stroke="#e03828" stroke-width="1" stroke-dasharray="2 1.500"/></g><g transform="translate(43,311)"><path d="M2 9 Q6 2 16 2 L24 5 L24 17 L12 22 L2 20Z" fill="none" stroke="#d03828" stroke-width="1" stroke-dasharray="2 1.500"/><path d="M7 13 Q9 7 16 7 L22 9 L22 18 L13 22 L7 20Z" fill="#4068d8"/><path d="M7 13 Q9 7 16 7 L22 9 L13 13Z" fill="#c8d8f8"/><path d="M7 13 L13 13 L13 22 L7 20Z" fill="#90b0f0"/></g><g transform="translate(43,343)"><path d="M1 7 L8 3 L16 5 L16 17 L9 21 L1 19Z" fill="url(#gb2)" stroke="#3858c0" stroke-width=".7"/><path d="M1 7 L8 3 L16 5 L9 9Z" fill="#eef4ff"/><path d="M16 5 L24 7 L24 18 L16 21Z M9 9 L16 8" fill="#f8d090" stroke="#d06828" stroke-width=".8" stroke-dasharray="2 1.500"/><path d="M9 9 V21" stroke="#3858c0" stroke-width=".7"/></g><g transform="translate(43,372)"><rect x="1" y="9" width="15" height="15" fill="#2e8c84" stroke="#1c5c58" stroke-width="1"/><circle cx="17" cy="9" r="7.500" fill="#2e8c84" stroke="#1c4c48" stroke-width="1.2"/></g><g transform="translate(43,402)"><rect x="1" y="9" width="15" height="15" fill="#2e8c84" stroke="#1c5c58" stroke-width="1"/><circle cx="17" cy="9" r="7.500" fill="#f4f2ea" stroke="#282828" stroke-width="1.2"/><path d="M9.500 9 h6.500 v7.500" fill="none" stroke="#90c0b8" stroke-width="1"/></g><path d="M48 433 v6 l-3.500 -3z" fill="#111"/><rect x="40" y="445" width="30" height="1" fill="#cfcbb8"/><rect x="40" y="446" width="30" height="1" fill="#fff"/></svg><div id="view" class="abs"></div><div id="vb" class="abs"></div><div id="vr" class="abs"></div><div id="l2b" class="abs"></div><div id="stsep" class="abs"></div><div id="vp" class="abs"></div><svg width="915" height="647" viewBox="0 0 915 647"><defs><clipPath id="cv"><rect x="74" y="146" width="838" height="501"/></clipPath></defs><g clip-path="url(#cv)"><ellipse class="g" cx="513.0" cy="481.6" rx="203.0" ry="137.4" transform="rotate(-15.30 513.0 481.6)"/>
<ellipse class="g" cx="516.2" cy="493.2" rx="199.0" ry="134.7" transform="rotate(-15.30 516.2 493.2)"/>
<ellipse class="g" cx="516.6" cy="494.8" rx="97.9" ry="66.3" transform="rotate(-15.30 516.6 494.8)"/>
<ellipse class="g" cx="473.5" cy="352.8" rx="280.7" ry="188.0" transform="rotate(-17.66 473.5 352.8)"/>
<ellipse class="g" cx="471.7" cy="347.0" rx="271.7" ry="181.4" transform="rotate(-17.13 471.7 347.0)"/>
<ellipse class="g" cx="467.3" cy="327.3" rx="101.5" ry="73.2" transform="rotate(-11.84 467.3 327.3)"/>
<ellipse class="g" cx="471.0" cy="334.6" rx="93.5" ry="65.5" transform="rotate(-12.00 471.0 334.6)"/>
<ellipse class="g" cx="467.6" cy="329.1" rx="203.9" ry="139.2" transform="rotate(-15.95 467.6 329.1)"/>
<ellipse class="g" cx="474.2" cy="347.1" rx="202.4" ry="137.0" transform="rotate(-15.12 474.2 347.1)"/>
<ellipse class="g" cx="512.8" cy="475.4" rx="281.4" ry="189.9" transform="rotate(-17.81 512.8 475.4)"/>
<ellipse class="g" cx="512.7" cy="482.5" rx="271.9" ry="183.7" transform="rotate(-16.99 512.7 482.5)"/>
<polyline class="g" points="422.4,536.6 424.7,540.6 427.4,544.4 430.6,548.1 434.1,551.5 437.9,554.7 442.1,557.7 446.6,560.5 451.4,562.9 456.5,565.2 461.9,567.1 467.5,568.7 473.3,570.1 479.3,571.2 485.5,571.9 491.8,572.4 498.3,572.5 504.8,572.3 511.3,571.8 517.9,571.1 524.5,570.0 531.1,568.6 537.6,566.9 544.1,564.9 550.4,562.7 556.6,560.2 562.6,557.4 568.4,554.4 574.0,551.1 579.4,547.6 584.5,544.0 589.3,540.1 593.9,536.1 598.1,531.9 601.9,527.6 605.4,523.1 608.5,518.6 611.3,514.0 613.6,509.3 615.6,504.6 617.1,499.8 618.2,495.1 618.8,490.4 619.1,485.7 618.9,481.1 618.3,476.6 617.2,472.1 615.7,467.8 613.8,463.6 611.5,459.6 608.8,455.8 605.7,452.1 602.3,448.6 598.5,445.4 594.3,442.4 589.8,439.6 585.0,437.1 579.9,434.9 574.6,432.9 569.0,431.3 563.2,429.9 557.2,428.8 551.0,428.0 544.7,427.6 538.3,427.4 531.8,427.6 525.2,428.0 518.6,428.8 512.0,429.9 505.4,431.2 498.9,432.9 492.5,434.9 486.1,437.1 479.9,439.6 473.9,442.3 468.1,445.3 462.4,448.6 457.0,452.0 451.9,455.7 447.1,459.5 442.5,463.6 438.3,467.7 434.4,472.0 430.9,476.5 427.7,481.0 425.0,485.6 422.6,490.3 420.6,495.0 419.1,499.7 418.0,504.5"/><polyline class="g" points="418.0,504.5 403.3,509.1 407.0,537.8 422.4,536.6"/>
<line class="g" x1="206.0" y1="438.0" x2="244.9" y2="561.5"/>
<line class="g" x1="741.0" y1="267.6" x2="780.7" y2="389.3"/>
<line class="g" x1="559.0" y1="308.5" x2="606.5" y2="472.0"/>
<line class="g" x1="351.6" y1="336.7" x2="403.0" y2="508.2"/>
<line class="g" x1="376.2" y1="331.6" x2="424.7" y2="493.5"/>
<line class="g" x1="355.3" y1="365.4" x2="406.7" y2="536.9"/>
<line class="g" x1="379.4" y1="360.8" x2="428.8" y2="525.6"/>
<ellipse class="b" cx="512.5" cy="479.7" rx="258.7" ry="175.1" transform="rotate(-15.30 512.5 479.7)"/>
<polyline class="b2" points="351.6,336.7 372.9,331.8 373.3,328.5 374.0,325.2 374.9,321.9 376.0,318.6 377.4,315.4 378.9,312.2 380.6,309.0 382.6,305.8 384.7,302.7 387.1,299.7 389.6,296.7 392.3,293.8 395.2,291.0 398.3,288.3 401.5,285.6 404.8,283.1 408.4,280.7 412.0,278.4 415.8,276.2 419.7,274.1 423.7,272.1 427.8,270.3 432.0,268.6 436.3,267.1 440.6,265.7 445.0,264.4 449.5,263.3 454.0,262.4 458.5,261.6 463.0,261.0 467.6,260.5 472.1,260.2 476.6,260.0 481.1,260.0 485.6,260.2 490.0,260.5 494.3,261.0 498.6,261.6 502.8,262.4 506.9,263.4 511.0,264.5 514.9,265.8 518.6,267.2 522.3,268.7 525.8,270.4 529.2,272.2 532.4,274.2 535.5,276.3 538.4,278.5 541.1,280.8 543.6,283.3 546.0,285.8 548.1,288.4 550.1,291.2 551.8,294.0 553.4,296.9 554.7,299.9 555.8,302.9 556.8,306.0 557.4,309.2 557.9,312.3 558.2,315.6 558.2,318.8 558.0,322.1 557.6,325.4 556.9,328.7 556.0,332.0 555.0,335.2 553.7,338.5 552.2,341.7 550.5,344.9 548.5,348.1 546.4,351.2 544.1,354.2 541.6,357.2 538.9,360.1 536.1,362.9 533.0,365.7 529.9,368.3 526.5,370.9 523.0,373.3 519.4,375.7 515.6,377.9 511.8,380.0 507.8,382.0 503.7,383.8 499.5,385.5 495.2,387.1 490.9,388.5 486.5,389.8 482.0,390.9 477.6,391.9 473.0,392.7 468.5,393.4 464.0,393.9 459.4,394.2 454.9,394.4 450.4,394.4 445.9,394.3 441.5,394.0 437.2,393.5 432.9,392.9 428.7,392.1 424.5,391.2 420.5,390.1 416.6,388.9 412.8,387.5 409.1,385.9 405.6,384.3 402.2,382.5 398.9,380.5 395.8,378.5 392.9,376.3 390.2,374.0 387.6,371.5 385.2,369.0 383.0,366.4 381.0,363.7 379.2,360.9 355.3,365.4 351.6,336.7"/>
<line x1="359.8" y1="350.1" x2="467.3" y2="327.9" stroke="#1fa3a8" stroke-width="1.6" stroke-dasharray="14 4.5 4 4.5"/>
<path class="b" d="M473.6 290.6 Q505 283 536.6 279.8 Q527 296 519 316.7 L496.9 321.8 Q492 303 473.6 290.6 Z"/>
<path class="b" d="M489.2 306 L521.9 299.7"/>
<path class="b" d="M507 303 L510.5 420 L512.1 480"/>
<path class="b" d="M489.2 305.4 L504.2 420 L512.1 480"/>
<line x1="512.1" y1="480" x2="500.8" y2="442" stroke="#000090" stroke-width="1.5"/>
<path d="M512.1 480 L507.2 442.5 L509.2 442.5 Z" fill="#18c070" stroke="#18c070" stroke-width="1"/>
<line x1="512.1" y1="480" x2="459.6" y2="491.4" stroke="#c8241c" stroke-width="2.2"/>
<text x="439" y="496" font-family="Liberation Sans,sans-serif" font-size="11" fill="#e87830">XC</text>
<text x="497" y="430" font-family="Liberation Sans,sans-serif" font-size="11" fill="#e87830">ZC</text>
<text x="508" y="430" font-family="Liberation Sans,sans-serif" font-size="11" fill="#e87830">YC</text>
<g fill="none"><circle cx="188.5" cy="201.5" r="11.300" stroke="#222" stroke-width=".9" stroke-dasharray="10.750 7" stroke-dashoffset="-3.500"/><g shape-rendering="crispEdges" stroke-width="1"><path d="M173 201.5 H205 M188.5 186 V218" stroke="#fff"/><path d="M173 200.5 H205 M173 202.5 H205 M187.5 186 V218 M189.5 186 V218" stroke="#000"/></g></g></g></svg></body></html>
